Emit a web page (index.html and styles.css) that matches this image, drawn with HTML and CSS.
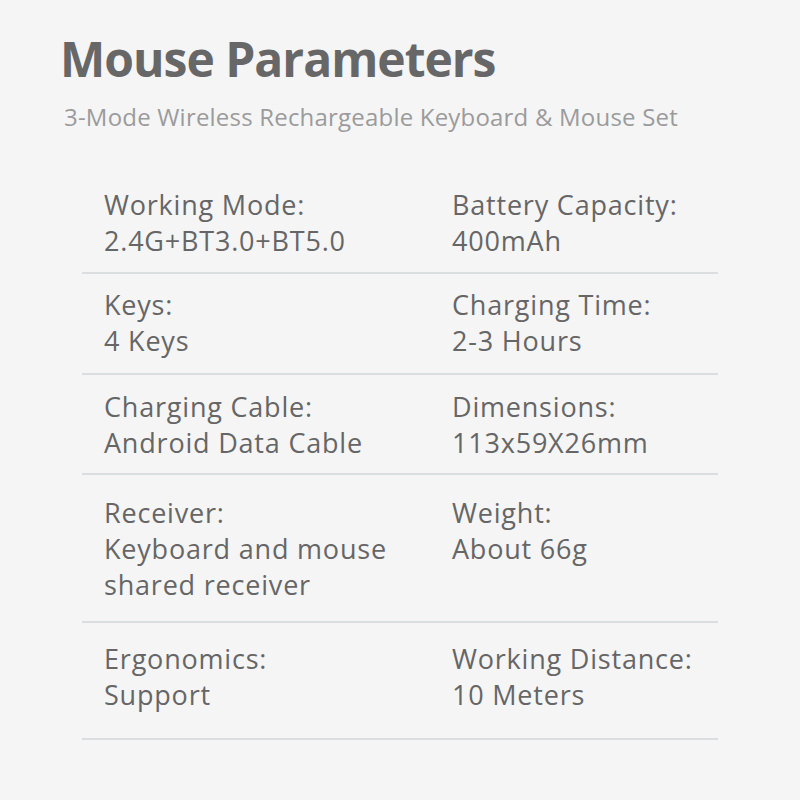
FILE: index.html
```html
<!DOCTYPE html>
<html lang="en">
<head>
<meta charset="utf-8">
<title>Mouse Parameters</title>
<link rel="stylesheet" href="styles.css">
</head>
<body>
<main class="page">
  <h1 class="title">Mouse Parameters</h1>
  <p class="subtitle">3-Mode Wireless Rechargeable Keyboard &amp; Mouse Set</p>
  <section class="specs">
    <div class="row row-first">
      <div class="cell"><div class="label">Working Mode:</div><div class="value">2.4G+BT3.0+BT5.0</div></div>
      <div class="cell"><div class="label">Battery Capacity:</div><div class="value">400mAh</div></div>
    </div>
    <div class="row">
      <div class="cell"><div class="label">Keys:</div><div class="value">4 Keys</div></div>
      <div class="cell"><div class="label">Charging Time:</div><div class="value">2-3 Hours</div></div>
    </div>
    <div class="row row-third">
      <div class="cell"><div class="label">Charging Cable:</div><div class="value">Android Data Cable</div></div>
      <div class="cell"><div class="label">Dimensions:</div><div class="value">113x59X26mm</div></div>
    </div>
    <div class="row row-tall">
      <div class="cell"><div class="label">Receiver:</div><div class="value">Keyboard and mouse<br>shared receiver</div></div>
      <div class="cell"><div class="label">Weight:</div><div class="value">About 66g</div></div>
    </div>
    <div class="row row-last">
      <div class="cell"><div class="label">Ergonomics:</div><div class="value">Support</div></div>
      <div class="cell"><div class="label">Working Distance:</div><div class="value">10 Meters</div></div>
    </div>
  </section>
</main>
</body>
</html>
```

FILE: styles.css
```css
html, body {
  margin: 0;
  padding: 0;
  background: #f5f5f5;
}
body {
  font-family: "Open Sans", "Noto Sans", "Liberation Sans", sans-serif;
  color: #666666;
  width: 800px;
  height: 800px;
  overflow: hidden;
}
.page {
  padding: 27px 0 0 60px;
}
.title {
  margin: 0;
  font-size: 48px;
  font-weight: 700;
  line-height: 64px;
  color: #676767;
  letter-spacing: -1px;
}
.subtitle {
  margin: 9px 0 0 4px;
  font-size: 24px;
  line-height: 34px;
  color: #9b9b9b;
  letter-spacing: 0.2px;
}
.specs {
  margin: 40px 0 0 22px;
  width: 636px;
}
.row {
  display: grid;
  grid-template-columns: 348px 1fr;
  padding: 13px 0 14px 22px;
  border-bottom: 2px solid #dadede;
  font-size: 27px;
  line-height: 36px;
  letter-spacing: 0.8px;
}
.row-first { padding-top: 13px; padding-bottom: 13px; }
.row-third { padding-top: 14px; padding-bottom: 12px; }
.row-tall { padding-top: 20px; padding-bottom: 18px; }
.row-last { padding-top: 18px; padding-bottom: 25px; }
.label, .value { white-space: nowrap; }
```
